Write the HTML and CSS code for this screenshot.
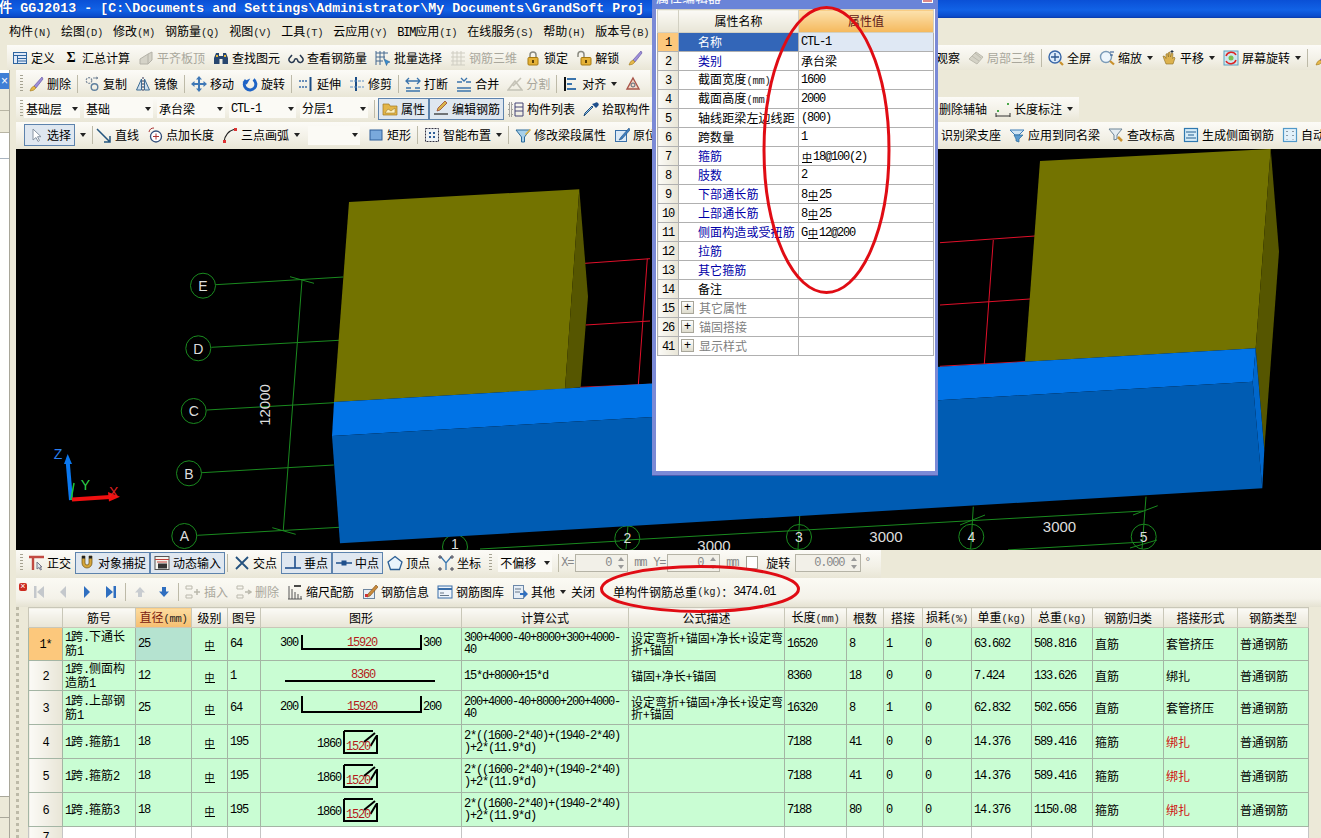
FILE: index.html
```html
<!DOCTYPE html>
<html lang="zh-CN">
<head>
<meta charset="utf-8">
<title>GGJ2013</title>
<link rel="stylesheet" href="styles.css">
</head>
<body>
<svg class="defs" aria-hidden="true">
<symbol id="def" viewBox="0 0 16 16"><rect x="1.500" y="2.500" width="13" height="11" fill="#dfe9f7" stroke="#2f659f"/><path d="M2 5.500h12M5.500 6v7M6 8.500h8M6 11h8" stroke="#2f659f"/></symbol>
<symbol id="flat" viewBox="0 0 16 16"><path d="M2 14V9l8-5v10zM10 4l4-2v8l-4 4" fill="#d5d3c8" stroke="#b4b2a8"/></symbol>
<symbol id="bino" viewBox="0 0 16 16"><path d="M1 14V8l2-5h3v3h4V3h3l2 5v6H9.500V9h-3v5z" fill="#27466f"/><path d="M3 5h2v2H3zM11 5h2v2h-2z" fill="#e8b93a"/></symbol>
<symbol id="glass" viewBox="0 0 16 16"><path d="M1.500 8a2.800 2.800 0 1 0 5 1.500M14.500 8a2.800 2.800 0 1 1-5 1.500M6.500 9.500q1.500-1.500 3 0M1.500 8 4 5M14.500 8 12 5" fill="none" stroke="#26374f" stroke-width="1.500"/></symbol>
<symbol id="batch" viewBox="0 0 16 16"><path d="M1 1v14M1 3h12M1 7h9M1 11h7M5 1v14M9 1v8" stroke="#44688f" fill="none"/><path d="m9 9 6 3-2.500 1-1 2.500z" fill="#3a8fd0" stroke="#1d4f80" stroke-width=".5"/></symbol>
<symbol id="grid3" viewBox="0 0 16 16"><path d="M1 3h14M1 7h14M1 11h14M1 15h14M3 1v14M7 1v14M11 1v14" stroke="#cfcdc2" fill="none"/></symbol>
<symbol id="lock" viewBox="0 0 16 16"><path d="M5 8V5a3 3 0 0 1 6 0v3" fill="none" stroke="#8a8a80" stroke-width="1.500"/><rect x="3" y="7.500" width="10" height="7.500" rx="1" fill="#e5b237" stroke="#a87a10"/><rect x="7" y="10" width="2" height="3" fill="#5c4208"/></symbol>
<symbol id="unlock" viewBox="0 0 16 16"><path d="M2 7V4.500a3 3 0 0 1 6 0V8" fill="none" stroke="#8a8a80" stroke-width="1.500"/><rect x="5" y="7.500" width="10" height="7.500" rx="1" fill="#e5b237" stroke="#a87a10"/><rect x="9" y="10" width="2" height="3" fill="#5c4208"/></symbol>
<symbol id="brush" viewBox="0 0 16 16"><path d="M14 1 6 10l2 2 7-9z" fill="#9d8fd8" stroke="#5b4aa0" stroke-width=".6"/><path d="M6 10q-3 1-4 5 4 0 6-3z" fill="#e6b84a" stroke="#a07a20" stroke-width=".6"/></symbol>
<symbol id="copy" viewBox="0 0 16 16"><circle cx="5" cy="4.500" r="2.800" fill="none" stroke="#7b8a9b" stroke-width="1.200" stroke-dasharray="2 1"/><circle cx="10.500" cy="11" r="3.300" fill="none" stroke="#5e7f9e" stroke-width="1.400"/><path d="M9 2h5M12 1l2 1-2 1" stroke="#7b8a9b" fill="none"/></symbol>
<symbol id="mirror" viewBox="0 0 16 16"><path d="M8 1v14" stroke="#335" stroke-dasharray="2 1"/><path d="M6.500 3v11H1.500z" fill="#cfe0ee" stroke="#3b6a92"/><path d="M9.500 3v11h5z" fill="#cfe0ee" stroke="#3b6a92"/></symbol>
<symbol id="move" viewBox="0 0 16 16"><path d="M8 0 11 3.500H9v3.500h3.500V5L16 8l-3.500 3V9H9v3.500h2L8 16l-3-3.500h2V9H3.500v2L0 8l3.500-3v2H7V3.500H5z" fill="#3f78b6"/></symbol>
<symbol id="rot" viewBox="0 0 16 16"><path d="M4 4a5.800 5.800 0 1 0 7.500-.5" fill="none" stroke="#1e63c5" stroke-width="3"/><path d="M7 1v7H2z" fill="#1e63c5" transform="rotate(30 5 4)"/></symbol>
<symbol id="extend" viewBox="0 0 16 16"><path d="M1 5h8M1 11h8" stroke="#3b6ea8" stroke-dasharray="2 1" stroke-width="1.500"/><path d="M12.500 1v14" stroke="#1a4c86" stroke-width="2"/></symbol>
<symbol id="trim" viewBox="0 0 16 16"><path d="M7 1v14" stroke="#1a4c86" stroke-width="2"/><path d="M1 5h14M1 11h14" stroke="#5a8dc2" stroke-dasharray="3 1"/></symbol>
<symbol id="break" viewBox="0 0 16 16"><path d="M1 5h14M4 2 1 5l3 3M12 2l3 3-3 3" fill="none" stroke="#3b74ac" stroke-width="1.300"/><path d="M1 12h5M10 12h5M1 15h14" stroke="#3b74ac" stroke-width="1.300"/></symbol>
<symbol id="merge" viewBox="0 0 16 16"><path d="M1 12h14M1 15h14M5 2 8 5 11 2M1 6h5M10 6h5" fill="none" stroke="#3b74ac" stroke-width="1.300"/></symbol>
<symbol id="split" viewBox="0 0 16 16"><path d="M1 14h14L8 5zM6 10l8-8" fill="none" stroke="#c4c2b6" stroke-width="1.500"/></symbol>
<symbol id="align" viewBox="0 0 16 16"><path d="M2 1v14" stroke="#111" stroke-width="2"/><path d="M4 3h9M4 8h5M4 13h9" stroke="#3b74ac" stroke-width="2"/></symbol>
<symbol id="offs" viewBox="0 0 16 16"><path d="M8 2 14 13H2z" fill="#f3d9c8" stroke="#a8554a" stroke-width="1.400"/><circle cx="8" cy="9" r="2" fill="none" stroke="#567"/></symbol>
<symbol id="prop" viewBox="0 0 16 16"><path d="M1 3h6l1 2h7v9H1z" fill="#e3b64a" stroke="#a07a20" stroke-width=".7"/><path d="m3 12 3-4 3 2 4-3v5z" fill="#fff2c2" stroke="#8c6c20" stroke-width=".5"/></symbol>
<symbol id="edit" viewBox="0 0 16 16"><path d="M1 13h14" stroke="#333" stroke-width="1.300"/><path d="M14 2 7 9l-3 1 1-3 7-7z" fill="#d9b44a" stroke="#9a4a30" stroke-width=".8"/></symbol>
<symbol id="list" viewBox="0 0 16 16"><path d="M1 2h3v3H1zM1 7h3v3H1zM1 12h3v3H1z" fill="none" stroke="#555" stroke-dasharray="1 1"/><path d="M7 2h8v13H7zM7 6h8M7 10h8" fill="none" stroke="#447"/></symbol>
<symbol id="drop" viewBox="0 0 16 16"><path d="M10 6 3 13l-2 2 1-3 7-7z" fill="#8fc1ea" stroke="#24537f"/><path d="M9 3l4 4 2-2a2 2 0 0 0-3-3z" fill="#1e4f8c"/></symbol>
<symbol id="cursor" viewBox="0 0 16 16"><path d="M5 2v11l3-2.500 2 4 1.500-1-2-3.800h3.500z" fill="#fff" stroke="#8894a2"/></symbol>
<symbol id="line" viewBox="0 0 16 16"><path d="M1 2 14 15M14 9v6H8" fill="none" stroke="#24557f" stroke-width="1.500"/></symbol>
<symbol id="ptlen" viewBox="0 0 16 16"><circle cx="9" cy="9.500" r="5.500" fill="#fff" stroke="#334f7a" stroke-width="1.300"/><path d="M6 9.500h6M9 6.500v6M2 5a5 5 0 0 1 5-4" stroke="#a33" fill="none"/></symbol>
<symbol id="arc" viewBox="0 0 16 16"><path d="M2 15Q3 5 13 2" fill="none" stroke="#222" stroke-width="1.300"/><path d="M1 13h3v3H1zM12 1h3v3h-3z" fill="#d33"/></symbol>
<symbol id="rect" viewBox="0 0 16 16"><rect x="2" y="3" width="12" height="10" fill="#79a9dc" stroke="#2f5f9a"/></symbol>
<symbol id="smart" viewBox="0 0 16 16"><rect x="1.500" y="1.500" width="13" height="13" fill="#eef2f4" stroke="#334" stroke-dasharray="2 1"/><path d="M5 5h2v2H5zM9 5h2v2H9zM5 9h2v2H5zM9 9h2v2H9z" fill="#2d5d96"/></symbol>
<symbol id="funnel" viewBox="0 0 16 16"><path d="M1 3h14L9.500 10v5h-3v-5z" fill="#a8d0e8" stroke="#2a6a9a"/><path d="M10 7 15 2l1 1-5 5z" fill="#e2b33c"/></symbol>
<symbol id="orig" viewBox="0 0 16 16"><rect x="1.500" y="3.500" width="11" height="11" fill="#dbe9f6" stroke="#3a70a8"/><path d="M15 1 7 10l-2 3 3-1 8-9z" fill="#3e7ec0" stroke="#23507e" stroke-width=".6"/></symbol>
<symbol id="cube" viewBox="0 0 16 16"><path d="M1 9 8 2l7 5-6 7z" fill="#d4d2c6" stroke="#bdbbaf"/><path d="m4 6 7 5M7 3l6 5" stroke="#bdbbaf"/></symbol>
<symbol id="full" viewBox="0 0 16 16"><circle cx="7" cy="7" r="6" fill="#dcebfa" stroke="#3866a8" stroke-width="1.400"/><path d="M7 3v8M3 7h8" stroke="#2a5590" stroke-width="1.300"/><path d="m12 12 3 3" stroke="#c9902c" stroke-width="2.200"/></symbol>
<symbol id="zoom" viewBox="0 0 16 16"><circle cx="7" cy="7" r="5.500" fill="#eef6fc" stroke="#7b9bb8" stroke-width="1.400"/><path d="m11 11 4 3.500" stroke="#c9902c" stroke-width="2.200"/><path d="M11 2h4M11 5h3" stroke="#2a5590"/></symbol>
<symbol id="hand" viewBox="0 0 16 16"><path d="M3 9 2 6l2 .5 1 2V4l1.500-.5L7.500 7V2.500L9 2l.5 5 1-4 1.500.5-.5 5 1.500-1.500 1 1L12 14H5z" fill="#dcb24f" stroke="#8c6c20" stroke-width=".6"/><path d="M11 0v3M9.500 1.500h3" stroke="#234"/></symbol>
<symbol id="srot" viewBox="0 0 16 16"><rect x="1" y="1" width="14" height="14" fill="#cfe6ee" stroke="#5ba0c0"/><path d="M3 6a5.500 5.500 0 0 1 10-1M13 10a5.500 5.500 0 0 1-10 1" fill="none" stroke="#d22" stroke-width="1.500"/><circle cx="8" cy="8" r="2.500" fill="#7cc050"/></symbol>
<symbol id="applyb" viewBox="0 0 16 16"><path d="M1 3h14L10 8H6z" fill="#cfe4f4" stroke="#3f7fb8"/><path d="M5 8h9l-4 4v3l-3-1v-2z" fill="#5a9ad0" stroke="#2a6a9a" stroke-width=".7"/></symbol>
<symbol id="checkh" viewBox="0 0 16 16"><path d="M1 2h13L9 8v4l-3 1V8z" fill="#e4ecf1" stroke="#6d8496"/><path d="m10 10 4 4" stroke="#c9902c" stroke-width="2.500"/></symbol>
<symbol id="side" viewBox="0 0 16 16"><rect x="1.500" y="1.500" width="13" height="13" fill="#d6ecf8" stroke="#2f79b0" stroke-width="1.200"/><path d="M3 5h10M3 11h10M5 8h6" stroke="#235e90"/></symbol>
<symbol id="auto" viewBox="0 0 16 16"><rect x="1.500" y="1.500" width="13" height="13" fill="#e3f1fa" stroke="#5199c9" stroke-width="1.200"/><path d="M5 4v1M5 8v1M5 12v.500M11 4v1M11 8v1M11 12v.500" stroke="#345"/></symbol>
<symbol id="len" viewBox="0 0 16 16"><path d="M1 15h14M1 12v5M15 12v5" stroke="#333"/><path d="M2 9h2v2H2zM12 2h2v2h-2z" fill="#4aa84a"/></symbol>
<symbol id="ortho" viewBox="0 0 16 16"><path d="M1 2h15M5 2v13" stroke="#c24a42" stroke-width="2.400"/><path d="M9 7v7l2-1.500 1.500 2.500 1-.5-1.500-2.500h2z" fill="#dfe6ea" stroke="#778"/></symbol>
<symbol id="snap" viewBox="0 0 16 16"><path d="M3 1v7a5 5 0 0 0 10 0V1h-3v7a2 2 0 0 1-4 0V1z" fill="#d5a53a" stroke="#6b5012" stroke-width=".7"/><path d="M3 1h3v2.500H3zM10 1h3v2.500h-3z" fill="#222"/></symbol>
<symbol id="dyn" viewBox="0 0 16 16"><rect x="1" y="1.500" width="14" height="13" fill="#f5f4ee" stroke="#555"/><path d="M1 4.500h14M3 7h10" stroke="#c0413a"/><rect x="4" y="8.500" width="9" height="5" fill="#333"/></symbol>
<symbol id="cross" viewBox="0 0 16 16"><path d="M2 2 14 14M14 2 2 14" stroke="#25527f" stroke-width="1.800"/></symbol>
<symbol id="perp" viewBox="0 0 16 16"><path d="M0 13h16" stroke="#1e4f8c" stroke-width="1.600"/><path d="M10 1v12" stroke="#1e4f8c" stroke-width="1.600"/></symbol>
<symbol id="mid" viewBox="0 0 16 16"><path d="M0 8h16" stroke="#1e4f8c" stroke-width="1.500"/><rect x="5.500" y="5.500" width="5" height="5" fill="#1e4f8c"/></symbol>
<symbol id="vertex" viewBox="0 0 16 16"><path d="M8 1.500 15 7l-2.500 7.500h-9L1 7z" fill="#eaf4fb" stroke="#2c5f95" stroke-width="1.300"/></symbol>
<symbol id="coord" viewBox="0 0 16 16"><path d="M3 2 8 8l5-6M8 8v7" fill="none" stroke="#3a78b0" stroke-width="1.300"/><path d="M1 1h2v2H1zM13 1h2v2h-2zM1 13h2v2H1zM13 13h2v2h-2z" fill="none" stroke="#445"/></symbol>
<symbol id="first" viewBox="0 0 16 16"><path d="M3 2h2.500v12H3zM13 2v12L6 8z" fill="#c4c8cc"/></symbol>
<symbol id="prev" viewBox="0 0 16 16"><path d="M11 2v12L5 8z" fill="#c4c8cc"/></symbol>
<symbol id="next" viewBox="0 0 16 16"><path d="M5 2v12l6-6z" fill="#2f6fc0"/></symbol>
<symbol id="last" viewBox="0 0 16 16"><path d="M3 2v12l7-6zM10.500 2H13v12h-2.500z" fill="#2f6fc0"/></symbol>
<symbol id="up" viewBox="0 0 16 16"><path d="M8 3 3 8.500h3V13h4V8.500h3z" fill="#c8ccd0"/></symbol>
<symbol id="down" viewBox="0 0 16 16"><path d="M8 13 3 7.500h3V3h4v4.500h3z" fill="#2f6fc0"/></symbol>
<symbol id="ins" viewBox="0 0 16 16"><path d="M1 2h6v3H1zM1 11h6v3H1z" fill="none" stroke="#bbb9ad"/><path d="M9 8h6M12 5v6" stroke="#bbb9ad" stroke-width="1.500"/></symbol>
<symbol id="delr" viewBox="0 0 16 16"><path d="M1 2h6v3H1zM1 11h6v3H1z" fill="none" stroke="#bbb9ad"/><path d="M9 8h6M12 6l3 2-3 2" fill="none" stroke="#bbb9ad" stroke-width="1.500"/></symbol>
<symbol id="scale" viewBox="0 0 16 16"><path d="M2 2v13M5 5v10M8 8v7M11 10v5M14 12v3M1 15h14" stroke="#555"/><path d="M7 2h7" stroke="#111" stroke-width="1.500"/></symbol>
<symbol id="info" viewBox="0 0 16 16"><rect x="1.500" y="5.500" width="11" height="9" fill="#e6eef6" stroke="#6d86a0"/><path d="M14 1 6 10l-1 3 3-1 8-9z" fill="#c98a3a" stroke="#7a4f18" stroke-width=".6"/><path d="M3 10h3v3H3z" fill="#c33"/></symbol>
<symbol id="lib" viewBox="0 0 16 16"><rect x="1" y="2" width="14" height="12" fill="#eef4fa" stroke="#3a6ea8"/><path d="M1 5h14" stroke="#3a6ea8" stroke-width="2"/><path d="M3 9h4M3 11.500h9" stroke="#678"/></symbol>
<symbol id="other" viewBox="0 0 16 16"><rect x="1.500" y="1.500" width="10" height="13" fill="#e6eef6" stroke="#6c88a8"/><path d="M3 5h6M3 8h5" stroke="#678"/><path d="M8 9h4V6l4 4-4 4v-3H8z" fill="#2f6fc0"/></symbol>
</svg>

<div class="app">
  <div class="title">件 GGJ2013 - [C:\Documents and Settings\Administrator\My Documents\GrandSoft Proj</div>
  <nav class="menu">
    <span>构件<i class="n u">(N)</i></span><span>绘图<i class="n u">(D)</i></span><span>修改<i class="n u">(M)</i></span><span>钢筋量<i class="n u">(Q)</i></span><span>视图<i class="n u">(V)</i></span><span>工具<i class="n u">(T)</i></span><span>云应用<i class="n u">(Y)</i></span><span><i class="n">BIM</i>应用<i class="n u">(I)</i></span><span>在线服务<i class="n u">(S)</i></span><span>帮助<i class="n u">(H)</i></span><span>版本号<i class="n u">(B)</i></span>
  </nav>
  <div class="tb tb1">
    <div class="tg tg1l">
      <span class="ti"><svg class="ic"><use href="#def"/></svg>定义</span>
      <span class="ti"><b class="sigma">Σ</b>汇总计算</span>
      <span class="ti off"><svg class="ic"><use href="#flat"/></svg>平齐板顶</span>
      <span class="ti"><svg class="ic"><use href="#bino"/></svg>查找图元</span>
      <span class="ti"><svg class="ic"><use href="#glass"/></svg>查看钢筋量</span>
      <span class="ti"><svg class="ic"><use href="#batch"/></svg>批量选择</span>
      <span class="ti off"><svg class="ic"><use href="#grid3"/></svg>钢筋三维</span>
      <span class="ti"><svg class="ic"><use href="#lock"/></svg>锁定</span>
      <span class="ti"><svg class="ic"><use href="#unlock"/></svg>解锁</span>
      <span class="ti"><svg class="ic"><use href="#brush"/></svg></span>
    </div>
    <div class="tg">
      <span class="ti">观察</span>
      <span class="ti off"><svg class="ic"><use href="#cube"/></svg>局部三维</span>
      <i class="sep"></i>
      <span class="ti"><svg class="ic"><use href="#full"/></svg>全屏</span>
      <span class="ti"><svg class="ic"><use href="#zoom"/></svg>缩放</span><i class="arrow"></i>
      <span class="ti"><svg class="ic"><use href="#hand"/></svg>平移</span><i class="arrow"></i>
      <span class="ti"><svg class="ic"><use href="#srot"/></svg>屏幕旋转</span><i class="arrow"></i>
      <i class="sep"></i>
      <span class="ti"><svg class="ic"><use href="#brush"/></svg></span>
    </div>
  </div>

  <div class="body">
    <aside class="side">
      <div class="side-pane">
        <div class="side-x">×</div>
        <div class="side-tab"></div>
        <div class="side-tab"></div>
        <div class="side-blank"></div>
        <div class="side-list"></div>
        <div class="side-foot"></div>
        <div class="side-foot"></div>
      </div>
    </aside>
    <div class="work">
      <div class="tb tb2">
        <i class="grip"></i>
        <span class="ti"><svg class="ic"><use href="#brush"/></svg>删除</span><i class="sep"></i>
        <span class="ti"><svg class="ic"><use href="#copy"/></svg>复制</span>
        <span class="ti"><svg class="ic"><use href="#mirror"/></svg>镜像</span><i class="sep"></i>
        <span class="ti"><svg class="ic"><use href="#move"/></svg>移动</span>
        <span class="ti"><svg class="ic"><use href="#rot"/></svg>旋转</span><i class="sep"></i>
        <span class="ti"><svg class="ic"><use href="#extend"/></svg>延伸</span>
        <span class="ti"><svg class="ic"><use href="#trim"/></svg>修剪</span><i class="sep"></i>
        <span class="ti"><svg class="ic"><use href="#break"/></svg>打断</span>
        <span class="ti"><svg class="ic"><use href="#merge"/></svg>合并</span>
        <span class="ti off"><svg class="ic"><use href="#split"/></svg>分割</span><i class="sep"></i>
        <span class="ti"><svg class="ic"><use href="#align"/></svg>对齐</span><i class="arrow"></i>
        <span class="ti"><svg class="ic"><use href="#offs"/></svg></span>
      </div>
      <div class="tb tb3">
        <div class="tg tg3l">
          <i class="grip"></i>
          <div class="combos">
            <span class="combo c56"><span>基础层</span><i class="arrow"></i></span>
            <span class="combo c69"><span>基础</span><i class="arrow"></i></span>
            <span class="combo c68"><span>承台梁</span><i class="arrow"></i></span>
            <span class="combo c67"><i class="n">CTL-1</i><i class="arrow"></i></span>
            <span class="combo c68"><span>分层<i class="n">1</i></span><i class="arrow"></i></span>
          </div>
          <i class="sep"></i>
          <div class="pair after-sep">
            <span class="ti on"><svg class="ic"><use href="#prop"/></svg>属性</span>
            <span class="ti on"><svg class="ic"><use href="#edit"/></svg>编辑钢筋</span>
          </div>
          <span class="ti"><svg class="ic"><use href="#list"/></svg>构件列表</span>
          <span class="ti"><svg class="ic"><use href="#drop"/></svg>拾取构件</span>
        </div>
        <div class="tg">
          <span class="ti">删除辅轴</span>
          <span class="ti"><svg class="ic"><use href="#len"/></svg>长度标注</span><i class="arrow"></i>
        </div>
      </div>
      <div class="tb tb4">
        <div class="tg tg4l">
          <span class="ti on"><svg class="ic"><use href="#cursor"/></svg>选择</span><i class="arrow"></i><i class="sep"></i>
          <span class="ti tight"><svg class="ic"><use href="#line"/></svg>直线</span>
          <span class="ti"><svg class="ic"><use href="#ptlen"/></svg>点加长度</span>
          <span class="ti"><svg class="ic"><use href="#arc"/></svg>三点画弧</span><i class="arrow"></i>
          <span class="combo c50"><i class="arrow"></i></span>
          <span class="ti"><svg class="ic"><use href="#rect"/></svg>矩形</span><i class="sep"></i>
          <span class="ti"><svg class="ic"><use href="#smart"/></svg>智能布置</span><i class="arrow"></i><i class="sep"></i>
          <span class="ti"><svg class="ic"><use href="#funnel"/></svg>修改梁段属性</span>
          <span class="ti"><svg class="ic"><use href="#orig"/></svg>原位</span>
        </div>
        <div class="tg">
          <span class="ti">识别梁支座</span>
          <span class="ti"><svg class="ic"><use href="#applyb"/></svg>应用到同名梁</span>
          <span class="ti"><svg class="ic"><use href="#checkh"/></svg>查改标高</span>
          <span class="ti"><svg class="ic"><use href="#side"/></svg>生成侧面钢筋</span>
          <span class="ti"><svg class="ic"><use href="#auto"/></svg>自动</span>
        </div>
      </div>

      <div class="viewport">
        <svg class="scene" viewBox="16 149 1305 401">
          <g class="gl">
            <path d="M215.700 284.700 343.300 277M211.300 347.300 339 340.300M206.700 410 334.300 402.700M202 472.700 333.700 465M197.300 535.300 339.300 527.300"/>
            <path d="M302 280 283.300 530M290 276.700 314 283.300M272.300 527.700 295.700 534.300"/>
            <circle cx="203" cy="285.700" r="12.500"/><circle cx="198.300" cy="348.300" r="12.500"/><circle cx="193.700" cy="411" r="12.500"/><circle cx="189" cy="473.300" r="12.500"/><circle cx="184.300" cy="536" r="12.500"/>
            <circle cx="455" cy="547" r="12.500"/><circle cx="627.300" cy="538.300" r="12.500"/><circle cx="799" cy="537" r="12.500"/><circle cx="971.300" cy="536.700" r="12.500"/><circle cx="1143.700" cy="536.700" r="12.500"/>
            <path d="M620 540.400 1143.300 511M480 549 620 541M1008 549.900 1143 542M973.300 506.700 970.700 549M1146 496.700 1142 549M960 525 985 515M1133 515 1157.700 505.700M1130 548 1157 540M800 510 798 549M628 525 626 549"/>
          </g>
          <g class="rl">
            <path d="M585 263.300 650 258.700M585.700 325 650 321M647.300 258.700 638.300 385M940 242.700 1035 236M940 305 1030 299M993.300 240 984.300 364M580 387.300 650 384.300M940 366.300 1025 361.700"/>
          </g>
          <path class="olive" d="M349 202 579.300 189.300 565 388.700 334 402z"/>
          <path class="olive-d" d="M579.300 189.300 588 296.700 580.700 387.300 565 388.700z"/>
          <path class="olive" d="M1040 161 1270.700 149 1255.700 348.300 1025 361.700z"/>
          <path class="olive-d" d="M1270.700 149 1279 251.700 1264.300 450 1255.700 348.300z"/>
          <path class="b-top" d="M334 402 1255.700 348.300 1252.700 381.700 332 436z"/>
          <path class="b-front" d="M332 436 1252.700 381.700 1262.300 488.300 340 543.300z"/>
          <path class="b-end" d="M1255.700 348.300 1264.300 450 1262.300 488.300 1252.700 381.700z"/>
          <g class="lbl">
            <text x="203" y="291">E</text><text x="198.300" y="353.500">D</text><text x="193.700" y="416">C</text><text x="189" y="478.500">B</text><text x="184.300" y="541">A</text>
            <text x="455" y="549">1</text><text x="627.300" y="543">2</text><text x="799" y="542">3</text><text x="971.300" y="542">4</text><text x="1143.700" y="542">5</text>
          </g>
          <g class="dim">
            <text transform="translate(269.500 405) rotate(-90)">12000</text>
            <text x="1059.500" y="532">3000</text><text x="886" y="541.500">3000</text><text x="714" y="551">3000</text>
          </g>
          <path d="M71 500 67.700 462" stroke="#0a78f0" stroke-width="4"/><path d="M67.700 454 64 464H72z" fill="#0a78f0"/>
          <path d="M71 500 74 483" stroke="#18c838" stroke-width="1.500"/>
          <path d="M72 499.500 110 497" stroke="#f01010" stroke-width="4"/><path d="M120 496.700 108 492 109 501.500z" fill="#f01010"/>
          <text class="ax az" x="58" y="459">Z</text><text class="ax ay" x="85.500" y="490">Y</text><text class="ax ax-x" x="113.700" y="497">X</text>
        </svg>
      </div>

      <div class="tb status">
        <i class="grip"></i>
        <span class="ti"><svg class="ic"><use href="#ortho"/></svg>正交</span>
        <div class="pair p-l">
          <span class="ti on"><svg class="ic"><use href="#snap"/></svg>对象捕捉</span>
          <span class="ti on"><svg class="ic"><use href="#dyn"/></svg>动态输入</span>
        </div>
        <i class="sep"></i>
        <span class="ti"><svg class="ic"><use href="#cross"/></svg>交点</span>
        <div class="pair p-l">
          <span class="ti on"><svg class="ic"><use href="#perp"/></svg>垂点</span>
          <span class="ti on"><svg class="ic"><use href="#mid"/></svg>中点</span>
        </div>
        <span class="ti"><svg class="ic"><use href="#vertex"/></svg>顶点</span>
        <span class="ti"><svg class="ic"><use href="#coord"/></svg>坐标</span>
        <i class="grip g2"></i>
        <span class="combo noffs"><span>不偏移</span><i class="arrow"></i></span>
        <i class="sep"></i>
        <span class="field-l fx n">X=</span><span class="spin s53"><i class="n">0</i></span><span class="unit n">mm</span>
        <span class="field-l fy n">Y=</span><span class="spin s53"><i class="n">0</i></span><span class="unit n">mm</span>
        <span class="check"></span><span>旋转</span>
        <span class="spin s66"><i class="n">0.000</i></span><span class="unit deg n">°</span>
      </div>

      <div class="tb rebar">
        <svg class="nav"><use href="#first"/></svg><svg class="nav"><use href="#prev"/></svg><svg class="nav"><use href="#next"/></svg><svg class="nav"><use href="#last"/></svg>
        <i class="sep"></i>
        <svg class="nav"><use href="#up"/></svg><svg class="nav"><use href="#down"/></svg>
        <i class="sep"></i>
        <span class="ti off"><svg class="ic"><use href="#ins"/></svg>插入</span>
        <span class="ti off"><svg class="ic"><use href="#delr"/></svg>删除</span>
        <span class="ti"><svg class="ic"><use href="#scale"/></svg>缩尺配筋</span>
        <span class="ti"><svg class="ic"><use href="#info"/></svg>钢筋信息</span>
        <span class="ti"><svg class="ic"><use href="#lib"/></svg>钢筋图库</span>
        <span class="ti"><svg class="ic"><use href="#other"/></svg>其他</span><i class="arrow"></i>
        <span class="ti close">关闭</span>
        <span class="ti total">单构件钢筋总重<i class="n u">(kg)</i>：<i class="n">3474.01</i></span>
      </div>

      <div class="gridwrap">
        <table class="grid">
          <colgroup><col class="w34"><col class="w73"><col class="w56"><col class="w36"><col class="w33"><col class="w201"><col class="w167"><col class="w155"><col class="w62"><col class="w37"><col class="w39"><col class="w49"><col class="w60"><col class="w61"><col class="w71"><col class="w74"><col class="w71"></colgroup>
          <thead>
            <tr><th></th><th>筋号</th><th class="hot">直径<i class="n u">(mm)</i></th><th>级别</th><th>图号</th><th>图形</th><th>计算公式</th><th>公式描述</th><th>长度<i class="n u">(mm)</i></th><th>根数</th><th>搭接</th><th>损耗<i class="n u">(%)</i></th><th>单重<i class="n u">(kg)</i></th><th>总重<i class="n u">(kg)</i></th><th>钢筋归类</th><th>搭接形式</th><th>钢筋类型</th></tr>
          </thead>
          <tbody>
            <tr class="r33">
              <td class="rh cur"><i class="n">1*</i></td><td class="nm"><i class="n">1</i>跨<i class="n">.</i>下通长<br>筋<i class="n">1</i></td><td class="sel n">25</td><td class="g"><i class="g3">中</i></td><td class="n">64</td>
              <td class="fig"><svg class="shape" viewBox="0 0 200 32"><path class="sk" d="M41 7V21H160V7"/><text class="st" x="19" y="18">300</text><text class="st red" x="86" y="18">15920</text><text class="st" x="162" y="18">300</text></svg></td>
              <td class="f n">300+4000-40+8000+300+4000-<br>40</td><td class="d">设定弯折+锚固+净长+设定弯<br>折+锚固</td><td class="n">16520</td><td class="n">8</td><td class="n">1</td><td class="n">0</td><td class="n">63.602</td><td class="n">508.816</td><td>直筋</td><td>套管挤压</td><td>普通钢筋</td>
            </tr>
            <tr class="r30">
              <td class="rh"><i class="n">2</i></td><td class="nm"><i class="n">1</i>跨<i class="n">.</i>侧面构<br>造筋<i class="n">1</i></td><td class="sel2 n">12</td><td class="g"><i class="g3">中</i></td><td class="n">1</td>
              <td class="fig"><svg class="shape" viewBox="0 0 200 29"><path class="sk" d="M24 20H174"/><text class="st red" x="90" y="17">8360</text></svg></td>
              <td class="f n">15*d+8000+15*d</td><td class="d">锚固+净长+锚固</td><td class="n">8360</td><td class="n">18</td><td class="n">0</td><td class="n">0</td><td class="n">7.424</td><td class="n">133.626</td><td>直筋</td><td>绑扎</td><td>普通钢筋</td>
            </tr>
            <tr class="r34">
              <td class="rh"><i class="n">3</i></td><td class="nm"><i class="n">1</i>跨<i class="n">.</i>上部钢<br>筋<i class="n">1</i></td><td class="sel2 n">25</td><td class="g"><i class="g3">中</i></td><td class="n">64</td>
              <td class="fig"><svg class="shape" viewBox="0 0 200 33"><path class="sk" d="M41 5V21H160V5"/><text class="st" x="19" y="19">200</text><text class="st red" x="86" y="19">15920</text><text class="st" x="162" y="19">200</text></svg></td>
              <td class="f n">200+4000-40+8000+200+4000-<br>40</td><td class="d">设定弯折+锚固+净长+设定弯<br>折+锚固</td><td class="n">16320</td><td class="n">8</td><td class="n">1</td><td class="n">0</td><td class="n">62.832</td><td class="n">502.656</td><td>直筋</td><td>套管挤压</td><td>普通钢筋</td>
            </tr>
            <tr class="r34">
              <td class="rh"><i class="n">4</i></td><td class="nm"><i class="n">1</i>跨<i class="n">.</i>箍筋<i class="n">1</i></td><td class="sel2 n">18</td><td class="g"><i class="g3">中</i></td><td class="n">195</td>
              <td class="fig"><svg class="shape" viewBox="0 0 200 33"><path class="sk" d="M83 6H112M116 10V28H83V6M114 8 103 17M115.500 11 109.500 21"/><text class="st" x="56" y="22">1860</text><text class="st red" x="85" y="25">1520</text></svg></td>
              <td class="f n">2*((1600-2*40)+(1940-2*40)<br>)+2*(11.9*d)</td><td></td><td class="n">7188</td><td class="n">41</td><td class="n">0</td><td class="n">0</td><td class="n">14.376</td><td class="n">589.416</td><td>箍筋</td><td class="rd">绑扎</td><td>普通钢筋</td>
            </tr>
            <tr class="r34">
              <td class="rh"><i class="n">5</i></td><td class="nm"><i class="n">1</i>跨<i class="n">.</i>箍筋<i class="n">2</i></td><td class="sel2 n">18</td><td class="g"><i class="g3">中</i></td><td class="n">195</td>
              <td class="fig"><svg class="shape" viewBox="0 0 200 33"><path class="sk" d="M83 6H112M116 10V28H83V6M114 8 103 17M115.500 11 109.500 21"/><text class="st" x="56" y="22">1860</text><text class="st red" x="85" y="25">1520</text></svg></td>
              <td class="f n">2*((1600-2*40)+(1940-2*40)<br>)+2*(11.9*d)</td><td></td><td class="n">7188</td><td class="n">41</td><td class="n">0</td><td class="n">0</td><td class="n">14.376</td><td class="n">589.416</td><td>箍筋</td><td class="rd">绑扎</td><td>普通钢筋</td>
            </tr>
            <tr class="r34">
              <td class="rh"><i class="n">6</i></td><td class="nm"><i class="n">1</i>跨<i class="n">.</i>箍筋<i class="n">3</i></td><td class="sel2 n">18</td><td class="g"><i class="g3">中</i></td><td class="n">195</td>
              <td class="fig"><svg class="shape" viewBox="0 0 200 33"><path class="sk" d="M83 6H112M116 10V28H83V6M114 8 103 17M115.500 11 109.500 21"/><text class="st" x="56" y="22">1860</text><text class="st red" x="85" y="25">1520</text></svg></td>
              <td class="f n">2*((1600-2*40)+(1940-2*40)<br>)+2*(11.9*d)</td><td></td><td class="n">7188</td><td class="n">80</td><td class="n">0</td><td class="n">0</td><td class="n">14.376</td><td class="n">1150.08</td><td>箍筋</td><td class="rd">绑扎</td><td>普通钢筋</td>
            </tr>
            <tr class="empty">
              <td class="rh"><i class="n">7</i></td><td></td><td class="sel2"></td><td></td><td></td><td></td><td></td><td></td><td></td><td></td><td></td><td></td><td></td><td></td><td></td><td></td><td></td>
            </tr>
          </tbody>
        </table>
      </div>
    </div>
  </div>

  <section class="dialog">
    <header class="dlg-title"><span>属性编辑器</span><i class="dlg-x"></i></header>
    <table class="props">
      <colgroup><col class="p1"><col class="p2"><col class="p3"></colgroup>
      <thead><tr><th></th><th>属性名称</th><th class="hot2">属性值</th></tr></thead>
      <tbody>
        <tr class="cur-row"><td class="rh cur"><i class="n">1</i></td><td class="pn">名称</td><td class="n">CTL-1</td></tr>
        <tr><td class="rh"><i class="n">2</i></td><td class="pn bl">类别</td><td>承台梁</td></tr>
        <tr><td class="rh"><i class="n">3</i></td><td class="pn">截面宽度<i class="n u">(mm)</i></td><td class="n">1600</td></tr>
        <tr><td class="rh"><i class="n">4</i></td><td class="pn">截面高度<i class="n u">(mm)</i></td><td class="n">2000</td></tr>
        <tr><td class="rh"><i class="n">5</i></td><td class="pn">轴线距梁左边线距</td><td class="n">(800)</td></tr>
        <tr><td class="rh"><i class="n">6</i></td><td class="pn">跨数量</td><td class="n">1</td></tr>
        <tr><td class="rh"><i class="n">7</i></td><td class="pn bl">箍筋</td><td><i class="g3">中</i><i class="n">18@100(2)</i></td></tr>
        <tr><td class="rh"><i class="n">8</i></td><td class="pn bl">肢数</td><td class="n">2</td></tr>
        <tr><td class="rh"><i class="n">9</i></td><td class="pn bl">下部通长筋</td><td><i class="n">8</i><i class="g3">中</i><i class="n">25</i></td></tr>
        <tr><td class="rh"><i class="n">10</i></td><td class="pn bl">上部通长筋</td><td><i class="n">8</i><i class="g3">中</i><i class="n">25</i></td></tr>
        <tr><td class="rh"><i class="n">11</i></td><td class="pn bl">侧面构造或受扭筋</td><td><i class="n">G</i><i class="g3">中</i><i class="n">12@200</i></td></tr>
        <tr><td class="rh"><i class="n">12</i></td><td class="pn bl">拉筋</td><td></td></tr>
        <tr><td class="rh"><i class="n">13</i></td><td class="pn bl">其它箍筋</td><td></td></tr>
        <tr><td class="rh"><i class="n">14</i></td><td class="pn">备注</td><td></td></tr>
        <tr><td class="rh"><i class="n">15</i></td><td class="pg"><i class="plus">+</i>其它属性</td><td></td></tr>
        <tr><td class="rh"><i class="n">26</i></td><td class="pg"><i class="plus">+</i>锚固搭接</td><td></td></tr>
        <tr><td class="rh"><i class="n">41</i></td><td class="pg"><i class="plus">+</i>显示样式</td><td></td></tr>
      </tbody>
    </table>
  </section>

  <svg class="annot" viewBox="0 0 1321 838" aria-hidden="true">
    <ellipse cx="826.500" cy="150" rx="62.500" ry="142.500"/>
    <ellipse cx="700" cy="589" rx="98.500" ry="22.500"/>
  </svg>
</div>
</body>
</html>
```

FILE: styles.css
```css
* { box-sizing: border-box; }
html, body { margin: 0; padding: 0; background: #ece9d8; }
body { font: 12px/1 "Noto Sans CJK SC", "Liberation Sans", sans-serif; color: #000; }
i { font-style: normal; }
.defs { position: absolute; width: 0; height: 0; }

.app { position: relative; width: 1321px; height: 838px; overflow: hidden; display: flex; flex-direction: column; background: #ece9d8; }

.n { font-family: "Liberation Mono", "Noto Sans CJK SC", monospace; font-size: 12px; letter-spacing: -1.2px; }
.u { font-size: 10.500px; letter-spacing: -.3px; color: #222; }

.title { flex: 0 0 18px; background: linear-gradient(#0a50d6 0, #1162e6 55%, #0a4ccc 90%, #0a3aa8 100%); color: #fff; font: bold 13.330px/17px "Liberation Mono", "Noto Sans CJK SC", monospace; white-space: nowrap; overflow: hidden; text-indent: -1px; text-shadow: 1px 0 #0a3aa8; }

.menu { flex: 0 0 27px; display: flex; align-items: center; gap: 10px; padding: 0 9px; white-space: nowrap; }

.tb { display: flex; align-items: center; gap: 8px; white-space: nowrap; background: linear-gradient(#fcfbf7, #f2f0e6 60%, #e9e6d6); overflow: hidden; flex: none; }
.tg { display: flex; align-items: center; gap: 8px; flex: none; }
.tb1 { height: 25px; margin-left: 7px; padding-left: 5px; }
.tg1l { width: 916px; overflow: hidden; }
.tb2 { height: 27px; width: 634px; padding-left: 4px; }
.tb2 .grip { margin-right: -3px; }
.tb3 { height: 25px; width: 1063px; padding: 0 0 2px 4px; }
.tg3l { width: 911px; overflow: hidden; }
.tb4 { height: 27px; padding: 0 0 1px 8px; }
.tg4l { width: 909px; overflow: hidden; }

.ti { display: inline-flex; align-items: center; gap: 3px; flex: none; }
.ti.off { color: #a9a79c; }
.ti.on { background: #dfe7f0; border: 1px solid #5d83ad; padding: 2px 3px; height: 22px; }
.ti.tight { margin-left: -3px; }
.ic { width: 16px; height: 16px; flex: none; display: block; }
.sigma { width: 16px; text-align: center; font: bold 14px "Liberation Serif", serif; }
.sep { width: 1px; height: 18px; background: #bdbaa8; margin: 0 -2px; flex: none; }
.grip { width: 3px; height: 18px; flex: none; background: repeating-linear-gradient(#a5a291 0 1px, transparent 1px 3px); }
.arrow { width: 0; height: 0; flex: none; margin-left: -3px; border: 3px solid transparent; border-top: 4px solid #222; border-bottom: 0; }

.combos { display: flex; gap: 4px; margin-left: -7px; flex: none; }
.combo { display: inline-flex; align-items: center; justify-content: space-between; height: 19px; padding: 0 2px; background: #fbfaf5; flex: none; }
.c56 { width: 56px; }
.c69 { width: 69px; }
.c68 { width: 68px; }
.c67 { width: 67px; }
.c50 { width: 52px; justify-content: flex-end; }
.pair { display: flex; margin-right: -4px; flex: none; }
.pair.after-sep { margin-left: -3px; }
.pair.p-l { margin-left: -4px; }

.body { flex: 1; display: flex; min-height: 0; }
.side { flex: 0 0 16px; }
.side-pane { width: 10px; height: 100%; background: #fff; display: flex; flex-direction: column; overflow: hidden; border-right: 1px solid #a9a79a; }
.side-x { flex: 0 0 16px; background: #3f7fd6; color: #fff; font: 12px/16px "Liberation Sans", sans-serif; text-align: center; margin-top: 3px; }
.side-tab { flex: 0 0 22px; background: #ece9d8; border-bottom: 1px solid #b8b5a4; }
.side-blank { flex: 0 0 26px; background: #fff; border-bottom: 1px solid #a9b4c0; }
.side-list { flex: 1; background: #fff; }
.side-foot { flex: 0 0 21px; background: #ece9d8; border-top: 1px solid #a9a79a; }

.work { flex: 1; min-width: 0; display: flex; flex-direction: column; }
.viewport { flex: 0 0 401px; background: #000; overflow: hidden; }
.scene { display: block; width: 1305px; height: 401px; }
.gl path, .gl circle { fill: none; stroke: #1a8a1f; stroke-width: 1; }
.rl path { fill: none; stroke: #e0102a; stroke-width: 1; }
.olive { fill: #737300; }
.olive-d { fill: #565600; }
.b-top { fill: #0073e6; }
.b-front { fill: #005cb3; }
.b-end { fill: #0067cc; }
.lbl text { fill: #ddd; font: 14px "Liberation Sans", sans-serif; text-anchor: middle; }
.dim text { fill: #ddd; font: 15px "Liberation Sans", sans-serif; text-anchor: middle; }
.ax { font: 14px "Liberation Sans", sans-serif; text-anchor: middle; }
.az { fill: #2a7ff0; }
.ay { fill: #2fd04a; }
.ax-x { fill: #e02020; }

.status { height: 28px; width: 865px; padding: 0 0 3px 4px; }
.status > .grip:first-child { margin-right: -3px; }
.noffs { width: 54px; margin-left: -2px; }
.field-l { color: #888; flex: none; }
.fx { margin-left: -4px; }
.fy { margin-left: -1px; }
.spin { position: relative; display: inline-flex; align-items: center; justify-content: flex-end; height: 18px; background: #f2f0e8; border: 1px solid #b5b3a6; color: #888; padding-right: 16px; flex: none; }
.spin::before, .spin::after { content: ""; position: absolute; right: 3px; width: 0; height: 0; border: 3px solid transparent; }
.spin::before { top: 2px; border-top: 0; border-bottom: 4px solid #999; }
.spin::after { bottom: 2px; border-bottom: 0; border-top: 4px solid #999; }
.s53 { width: 53px; margin-left: -6px; }
.s66 { width: 66px; margin-left: -3px; }
.unit { color: #888; margin-left: -2px; flex: none; }
.deg { margin-left: -5px; }
.check { width: 12px; height: 13px; background: #fff; border: 1px solid #a3a195; flex: none; }

.rebar { height: 29px; padding: 0 0 1px 15px; position: relative; background: linear-gradient(#fbfaf4, #f4f2e9 70%, #e5e2d2); }
.rebar::before { content: "×"; width: 8px; height: 8px; background: #cc2b20; color: #fff; font: 9px/7px "Liberation Sans", sans-serif; text-align: center; border-radius: 2px; position: absolute; left: 3px; top: 5px; }
.nav { width: 16px; height: 16px; flex: none; }
.close { margin-left: -3px; }
.total { margin-left: 10px; gap: 0; }

.gridwrap { flex: 1; min-height: 0; overflow: hidden; padding-left: 9px; border-left: 3px dotted #bdbaa8; background: #ece9d8; }
.grid { border-collapse: collapse; table-layout: fixed; width: 1280px; background: #fff; border-top: 1px solid #8aa; }
.grid col.w34 { width: 34px; } .grid col.w73 { width: 73px; } .grid col.w56 { width: 56px; } .grid col.w36 { width: 36px; } .grid col.w33 { width: 33px; } .grid col.w201 { width: 201px; } .grid col.w167 { width: 167px; } .grid col.w155 { width: 156px; } .grid col.w62 { width: 62px; } .grid col.w37 { width: 37px; } .grid col.w39 { width: 39px; } .grid col.w49 { width: 49px; } .grid col.w60 { width: 60px; } .grid col.w61 { width: 61px; } .grid col.w71 { width: 71px; } .grid col.w74 { width: 74px; }
.grid th { height: 20px; font-weight: 400; text-align: center; padding: 0; border: 1px solid #c9c7b8; background: linear-gradient(#fbfaf6, #e8e5d6); }
.grid th.hot { background: linear-gradient(#fcdca0, #f6be70); color: #7a1a10; }
.grid td { padding: 0 2px; border: 1px solid #a4b5a4; background: #c9fdd3; line-height: 12px; overflow: hidden; vertical-align: middle; white-space: nowrap; }
.grid .r33 td { height: 33px; }
.grid .r30 td { height: 30px; }
.grid .r34 td { height: 34px; }
.grid .empty td { height: 20px; background: #fff; border-color: #c5c5c5; }
.grid td.rh, .props td.rh { text-align: center; background: linear-gradient(90deg, #fbfaf6, #e8e5d6); }
.grid td.rh.cur, .props td.rh.cur { background: #fcc87c; }
.grid td.sel { background: #b5e3d0; border-left: 1px solid #000; }
.grid td.sel2 { border-left: 1px solid #000; }
.grid td.g { text-align: center; }
.grid td.fig { padding: 0; }
.grid td.rd { color: #d01010; }
.g3 { display: inline-block; font-size: 10px; line-height: 9px; height: 11px; border-bottom: 1px solid #000; width: 10px; margin: 0 1px; text-align: center; vertical-align: -1px; }
.shape { display: block; width: 200px; }
.r33 .shape { height: 32px; }
.r30 .shape { height: 29px; }
.r34 .shape { height: 33px; }
.sk { fill: none; stroke: #000; stroke-width: 2; }
.st { font: 12px "Liberation Mono", monospace; letter-spacing: -1.2px; fill: #000; }
.st.red { fill: #b41a1a; }

.dialog { position: absolute; left: 652px; top: -15px; width: 286px; height: 490px; background: #fff; border: 4px solid #7b8ad6; border-top: 0; border-right-width: 3px; box-shadow: 0 1px 0 #4a5cb0; }
.dlg-title { height: 24px; margin: 0 -3px 0 -4px; padding-left: 4px; background: #6a84d8; color: #fff; font-size: 13px; line-height: 24px; display: flex; justify-content: space-between; }
.dlg-x { width: 11px; height: 18px; background: #d88; border: 1px solid #fff; margin-right: 5px; }
.props { border-collapse: collapse; table-layout: fixed; width: 276px; margin-left: 1px; }
.props col.p1 { width: 21px; }
.props col.p2 { width: 120px; }
.props col.p3 { width: 135px; }
.props th { height: 23px; font-weight: 400; font-size: 12px; border: 1px solid #d2d0c2; background: linear-gradient(#fbfaf6, #e8e5d6); }
.props th.hot2 { background: linear-gradient(#fce2ae, #f5b85c); color: #5e1616; }
.props td { height: 19px; padding: 0 2px; border: 1px solid #b0b0b0; white-space: nowrap; overflow: hidden; }
.props td.pn { padding-left: 19px; letter-spacing: .1px; }
.props td.pg { color: #808080; padding-left: 2px; line-height: 14px; }
.props td.bl { color: #0000a8; }
.plus { display: inline-block; width: 13px; height: 13px; border: 1px solid #a8a69a; background: linear-gradient(#fff, #dedccd); color: #000; font: 12px/11px "Liberation Sans", sans-serif; text-align: center; margin-right: 5px; vertical-align: top; }
.cur-row td { background: #dfe8f4; }
.cur-row td.pn { background: #3366b8; color: #fff; }

.annot { position: absolute; left: 0; top: 0; width: 1321px; height: 838px; pointer-events: none; }
.annot ellipse { fill: none; stroke: #e00c14; stroke-width: 3; }
```
